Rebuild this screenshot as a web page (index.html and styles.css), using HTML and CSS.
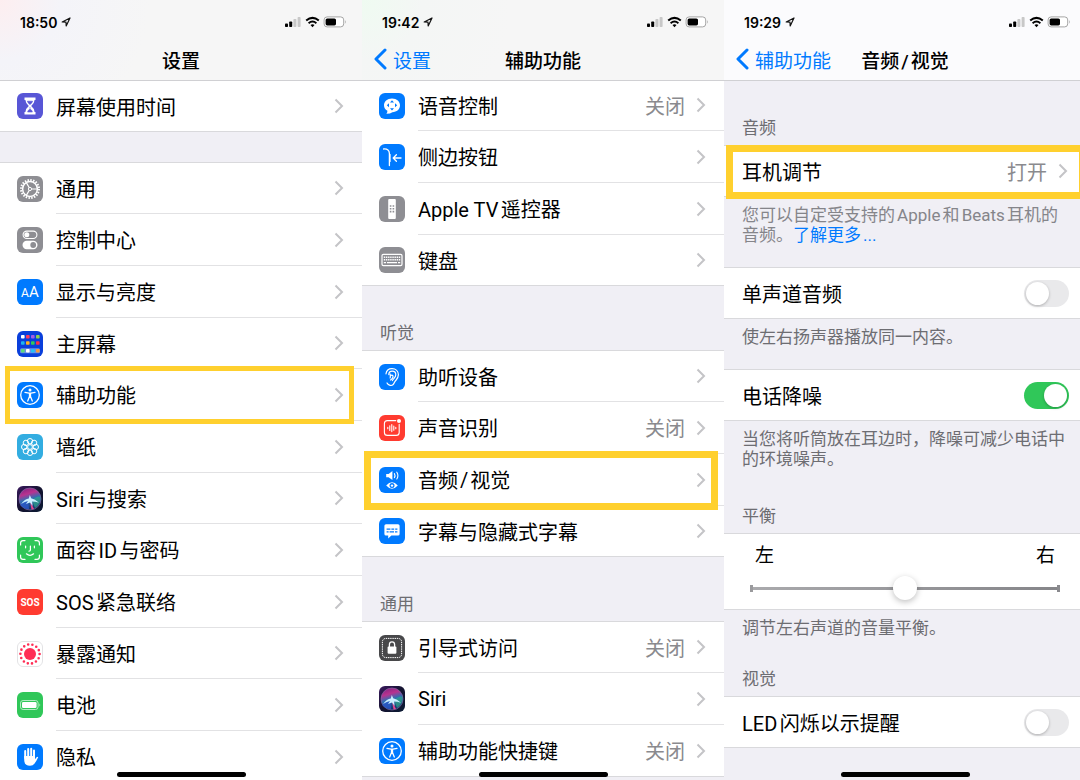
FILE: index.html
```html
<!DOCTYPE html>
<html lang="zh-CN">

<head>
    <meta charset="UTF-8">
    <meta name="viewport" content="width=device-width, initial-scale=1.0">
    <title>设置</title>
    <link rel="stylesheet" href="styles.css">
</head>

<body>
    <!-- shared icons -->
    <svg class="defs" aria-hidden="true">
        <defs>
            <linearGradient id="siri-bg" x1="0" y1="0" x2="1" y2="1">
                <stop offset="0" stop-color="#3a1a5e" />
                <stop offset="0.5" stop-color="#141330" />
                <stop offset="1" stop-color="#0a1a33" />
            </linearGradient>
            <linearGradient id="siri-orb" x1="0" y1="0" x2="0.3" y2="1">
                <stop offset="0" stop-color="#7a2080" />
                <stop offset="0.35" stop-color="#b8338f" />
                <stop offset="0.6" stop-color="#2d6fb4" />
                <stop offset="1" stop-color="#17346e" />
            </linearGradient>
        </defs>
        <symbol id="chevron" viewBox="0 0 10 16">
            <path d="M1.5 1.5 L8 8 L1.5 14.5" fill="none" stroke="#c4c4c7" stroke-width="2" />
        </symbol>
        <symbol id="back" viewBox="0 0 14 22">
            <path d="M12 2 L3 11 L12 20" fill="none" stroke="#007aff" stroke-width="3" stroke-linecap="round" stroke-linejoin="round" />
        </symbol>
        <symbol id="location" viewBox="0 0 10 10">
            <path d="M1.2 5 L9 1 L5.2 8.9 L5 5.2 Z" fill="none" stroke="#111" stroke-width="1.2" stroke-linejoin="round" />
        </symbol>
        <symbol id="status" viewBox="0 0 62 12">
            <rect x="0" y="7.5" width="3" height="3.5" rx="0.8" />
            <rect x="4.2" y="5.5" width="3" height="5.5" rx="0.8" />
            <rect x="8.4" y="3" width="3" height="8" rx="0.8" fill="#c8c8c8" />
            <rect x="12.6" y="1" width="3" height="10" rx="0.8" fill="#c8c8c8" />
            <path d="M21.2 4.6 Q27.5 -0.8 33.8 4.6" fill="none" stroke="#000" stroke-width="2" />
            <path d="M23.6 7.2 Q27.5 4 31.4 7.2" fill="none" stroke="#000" stroke-width="1.9" />
            <path d="M25.5 9 Q27.5 7.6 29.5 9 L27.5 11.2 Z" />
            <rect x="39.1" y="0.9" width="19.6" height="10" rx="3" fill="#fff" stroke="#a5a5a5" stroke-width="1" />
            <rect x="40.6" y="2.4" width="10.4" height="7" rx="1.6" />
            <path d="M60 4 Q61.6 5.9 60 7.8 Z" fill="#a5a5a5" />
        </symbol>
        <symbol id="accessibility" viewBox="0 0 26 26">
            <rect width="26" height="26" rx="6" fill="#007aff" />
            <circle cx="13" cy="13" r="9.3" fill="none" stroke="#fff" stroke-width="1.3" />
            <circle cx="13" cy="7.9" r="1.5" fill="#fff" />
            <path d="M8 10.4 L12 11.1 H14 L18 10.4 M12.5 11.4 V14.6 L10.7 19 M13.5 11.4 V14.6 L15.3 19" fill="none" stroke="#fff" stroke-width="1.3" stroke-linecap="round" stroke-linejoin="round" />
        </symbol>
        <symbol id="siri" viewBox="0 0 26 26">
            <rect width="26" height="26" rx="6" fill="url(#siri-bg)" />
            <circle cx="13" cy="13" r="11" fill="url(#siri-orb)" stroke="#8a6fae" stroke-width="0.6" />
            <path d="M15 14 Q21 9 23.5 11 Q24 18 18 22 Z" fill="#2fa88a" opacity="0.7" />
            <path d="M11 13 Q7 15 3 19 Q7 23.5 12 23 Z" fill="#2b59c9" opacity="0.8" />
            <path d="M13 15 L17 23 L14.5 23.6 Z" fill="#e6468e" />
            <path d="M4 18 Q8 12.8 11.8 12.4 L12.8 9 L14.2 12.2 Q18 13 22 16.8 Q18 15.4 15.2 15.4 L15.6 20 L13 16.6 L9 18 L11 15 Q8 15.6 4 18 Z" fill="#c9efff" />
        </symbol>
    </svg>

    <main class="screens">
        <section class="screen">
            <header class="navbar navbar--pink">
                <div class="status">
                    <span class="time">18:50</span>
                    <svg class="location"><use href="#location" /></svg>
                    <svg class="signals"><use href="#status" /></svg>
                </div>
                <div class="titlebar">
                    <h1 class="title">设置</h1>
                </div>
            </header>

            <ul class="group group--first">
                <li class="row">
                    <a class="link" href="#">
                        <svg class="icon" viewBox="0 0 26 26">
                            <rect width="26" height="26" rx="6" fill="#5856d6" />
                            <path d="M7.5 4.5 H18.5 V7 H17.6 Q17.4 10.5 14.2 13 Q17.4 15.5 17.6 19 H18.5 V21.5 H7.5 V19 H8.4 Q8.6 15.5 11.8 13 Q8.6 10.5 8.4 7 H7.5 Z" fill="#fff" />
                            <path d="M10.4 8.2 H15.6 Q14.9 10.4 13 11.6 Q11.1 10.4 10.4 8.2 Z M13 14 V16.4 M10.6 19 Q11 16.8 13 16.2 Q15 16.8 15.4 19 Z" fill="#5856d6" stroke="#5856d6" stroke-width="0.6" />
                        </svg>
                        <span class="cell">屏幕使用时间<svg class="chevron"><use href="#chevron" /></svg></span>
                    </a>
                </li>
            </ul>

            <ul class="group group--spaced">
                <li class="row">
                    <a class="link" href="#">
                        <svg class="icon" viewBox="0 0 26 26">
                            <rect width="26" height="26" rx="6" fill="#8e8e93" />
                            <circle cx="13" cy="13" r="9" fill="none" stroke="#fff" stroke-width="2" stroke-dasharray="1.5 1.327" />
                            <circle cx="13" cy="13" r="7.4" fill="none" stroke="#fff" stroke-width="1.5" />
                            <path d="M13 13 H20 M13 13 L9.5 6.9 M13 13 L9.5 19.1" stroke="#fff" stroke-width="1.2" />
                            <circle cx="13" cy="13" r="1.6" fill="#8e8e93" stroke="#fff" stroke-width="1" />
                        </svg>
                        <span class="cell">通用<svg class="chevron"><use href="#chevron" /></svg></span>
                    </a>
                </li>
                <li class="row">
                    <a class="link" href="#">
                        <svg class="icon" viewBox="0 0 26 26">
                            <rect width="26" height="26" rx="6" fill="#8e8e93" />
                            <rect x="6.1" y="4.1" width="13.8" height="7.4" rx="3.7" fill="none" stroke="#fff" stroke-width="1.1" />
                            <circle cx="9.8" cy="7.8" r="2.5" fill="#fff" />
                            <rect x="5.5" y="13.8" width="15" height="8.4" rx="4.2" fill="#fff" />
                            <circle cx="16.2" cy="18" r="2.9" fill="#8e8e93" />
                        </svg>
                        <span class="cell">控制中心<svg class="chevron"><use href="#chevron" /></svg></span>
                    </a>
                </li>
                <li class="row">
                    <a class="link" href="#">
                        <svg class="icon" viewBox="0 0 26 26">
                            <rect width="26" height="26" rx="6" fill="#007aff" />
                            <text class="glyph" x="8" y="18" font-size="12">A</text>
                            <text class="glyph" x="17" y="18" font-size="15">A</text>
                        </svg>
                        <span class="cell">显示与亮度<svg class="chevron"><use href="#chevron" /></svg></span>
                    </a>
                </li>
                <li class="row">
                    <a class="link" href="#">
                        <svg class="icon" viewBox="0 0 26 26">
                            <rect width="26" height="26" rx="6" fill="#0a3fdb" />
                            <rect x="3" y="17.3" width="20" height="5" rx="1.5" fill="#6d8fe8" />
                            <rect x="4" y="4" width="3.6" height="3.6" rx="0.8" fill="#fff" />
                            <rect x="9" y="4" width="3.6" height="3.6" rx="0.8" fill="#ff3b5c" />
                            <rect x="14" y="4" width="3.6" height="3.6" rx="0.8" fill="#a45ee5" />
                            <rect x="19" y="4" width="3.6" height="3.6" rx="0.8" fill="#8fd14f" />
                            <rect x="4" y="10.2" width="3.6" height="3.6" rx="0.8" fill="#1cb5f0" />
                            <rect x="9" y="10.2" width="3.6" height="3.6" rx="0.8" fill="#ffb020" />
                            <rect x="14" y="10.2" width="3.6" height="3.6" rx="0.8" fill="#34c759" />
                            <rect x="19" y="10.2" width="3.6" height="3.6" rx="0.8" fill="#ff2d46" />
                            <rect x="4" y="18" width="3.6" height="3.6" rx="0.8" fill="#5ddc7a" />
                            <rect x="9" y="18" width="3.6" height="3.6" rx="0.8" fill="#fff" />
                            <rect x="14" y="18" width="3.6" height="3.6" rx="0.8" fill="#25c3f5" />
                            <rect x="19" y="18" width="3.6" height="3.6" rx="0.8" fill="#f59a3c" />
                        </svg>
                        <span class="cell">主屏幕<svg class="chevron"><use href="#chevron" /></svg></span>
                    </a>
                </li>
                <li class="row">
                    <a class="link" href="#">
                        <svg class="icon"><use href="#accessibility" /></svg>
                        <span class="cell">辅助功能<svg class="chevron"><use href="#chevron" /></svg></span>
                    </a>
                    <span class="mark"></span>
                </li>
                <li class="row">
                    <a class="link" href="#">
                        <svg class="icon" viewBox="0 0 26 26">
                            <rect width="26" height="26" rx="6" fill="#32ade1" />
                            <g fill="none" stroke="#fff" stroke-width="1">
                                <circle cx="13" cy="13" r="2.4" />
                                <circle cx="13" cy="7.2" r="2.7" />
                                <circle cx="17.1" cy="8.9" r="2.7" />
                                <circle cx="18.8" cy="13" r="2.7" />
                                <circle cx="17.1" cy="17.1" r="2.7" />
                                <circle cx="13" cy="18.8" r="2.7" />
                                <circle cx="8.9" cy="17.1" r="2.7" />
                                <circle cx="7.2" cy="13" r="2.7" />
                                <circle cx="8.9" cy="8.9" r="2.7" />
                            </g>
                        </svg>
                        <span class="cell">墙纸<svg class="chevron"><use href="#chevron" /></svg></span>
                    </a>
                </li>
                <li class="row">
                    <a class="link" href="#">
                        <svg class="icon"><use href="#siri" /></svg>
                        <span class="cell">Siri与搜索<svg class="chevron"><use href="#chevron" /></svg></span>
                    </a>
                </li>
                <li class="row">
                    <a class="link" href="#">
                        <svg class="icon" viewBox="0 0 26 26">
                            <rect width="26" height="26" rx="6" fill="#30c759" />
                            <g fill="none" stroke="#fff" stroke-width="1.2" stroke-linecap="round">
                                <path d="M3.6 8 V6 Q3.6 3.6 6 3.6 H8 M18 3.6 H20 Q22.4 3.6 22.4 6 V8 M22.4 18 V20 Q22.4 22.4 20 22.4 H18 M8 22.4 H6 Q3.6 22.4 3.6 20 V18" />
                                <path d="M8.6 9 V10.8 M17.4 9 V10.8 M13.4 9 V13 Q13.4 14.2 12 14.2 M9.4 16.8 Q13 20 16.6 16.8" />
                            </g>
                        </svg>
                        <span class="cell">面容ID与密码<svg class="chevron"><use href="#chevron" /></svg></span>
                    </a>
                </li>
                <li class="row">
                    <a class="link" href="#">
                        <svg class="icon" viewBox="0 0 26 26">
                            <rect width="26" height="26" rx="6" fill="#ff3b30" />
                            <text class="glyph glyph--sos" x="13" y="17" font-size="10">SOS</text>
                        </svg>
                        <span class="cell">SOS紧急联络<svg class="chevron"><use href="#chevron" /></svg></span>
                    </a>
                </li>
                <li class="row">
                    <a class="link" href="#">
                        <svg class="icon" viewBox="0 0 26 26">
                            <rect x="0.5" y="0.5" width="25" height="25" rx="5.5" fill="#fff" stroke="#e3e3e5" />
                            <circle cx="13" cy="13" r="6" fill="#ff2d55" />
                            <circle cx="13" cy="13" r="9.6" fill="none" stroke="#ff2d55" stroke-width="2.6" stroke-linecap="round" stroke-dasharray="0 4.308" />
                        </svg>
                        <span class="cell">暴露通知<svg class="chevron"><use href="#chevron" /></svg></span>
                    </a>
                </li>
                <li class="row">
                    <a class="link" href="#">
                        <svg class="icon" viewBox="0 0 26 26">
                            <rect width="26" height="26" rx="6" fill="#30c759" />
                            <rect x="3.5" y="8.5" width="17.6" height="9" rx="2.6" fill="none" stroke="#b5ebc4" />
                            <rect x="5" y="10" width="14.6" height="6" rx="1.3" fill="#fff" />
                            <path d="M22.4 11.3 Q24.2 13 22.4 14.7 Z" fill="#b5ebc4" />
                        </svg>
                        <span class="cell">电池<svg class="chevron"><use href="#chevron" /></svg></span>
                    </a>
                </li>
                <li class="row">
                    <a class="link" href="#">
                        <svg class="icon" viewBox="0 0 26 26">
                            <rect width="26" height="26" rx="6" fill="#007aff" />
                            <path d="M8.2 14 V7 M11.2 12 V5 M14.2 12 V4.8 M17 13 V6.6" stroke="#fff" stroke-width="2" stroke-linecap="round" />
                            <path d="M7.2 12 H18 V15.2 L19.6 13.2 Q20.6 12.2 21.2 13.2 Q19.4 17 17.6 19.6 Q16 21.8 13 21.8 Q7.2 21.8 7.2 16 Z" fill="#fff" />
                        </svg>
                        <span class="cell">隐私<svg class="chevron"><use href="#chevron" /></svg></span>
                    </a>
                </li>
            </ul>
            <div class="home-bar"></div>
        </section>

        <section class="screen">
            <header class="navbar navbar--green">
                <div class="status">
                    <span class="time">19:42</span>
                    <svg class="location"><use href="#location" /></svg>
                    <svg class="signals"><use href="#status" /></svg>
                </div>
                <div class="titlebar">
                    <a class="back" href="#"><svg class="back-icon"><use href="#back" /></svg>设置</a>
                    <h1 class="title">辅助功能</h1>
                </div>
            </header>

            <ul class="group group--scrolled">
                <li class="row">
                    <a class="link" href="#">
                        <svg class="icon" viewBox="0 0 26 26">
                            <rect width="26" height="26" rx="6" fill="#007aff" />
                            <path d="M13 5.4 C17.8 5.4 21 8.4 21 12.3 C21 16.2 17.8 19.2 13.4 19.2 Q11.4 20.8 7.4 20.8 Q8.6 19.4 8.4 17.8 Q5 15.8 5 12.3 C5 8.4 8.2 5.4 13 5.4 Z" fill="#fff" />
                            <path d="M13 7.2 L15 9.4 H11 Z M13 17.4 L15 15.2 H11 Z M7.8 12.3 L10 10.3 V14.3 Z M18.2 12.3 L16 10.3 V14.3 Z" fill="#007aff" />
                        </svg>
                        <span class="cell">语音控制<span class="value">关闭</span><svg class="chevron"><use href="#chevron" /></svg></span>
                    </a>
                </li>
                <li class="row">
                    <a class="link" href="#">
                        <svg class="icon" viewBox="0 0 26 26">
                            <rect width="26" height="26" rx="6" fill="#007aff" />
                            <path d="M4.6 5 Q10.4 4.6 10.4 9.4 V21.6 M11 10.4 V17.4" fill="none" stroke="#fff" stroke-width="1.3" stroke-linecap="round" />
                            <path d="M22 14 H14.4 M17.4 10.8 L14.2 14 L17.4 17.2" fill="none" stroke="#fff" stroke-width="1.3" stroke-linecap="round" stroke-linejoin="round" />
                        </svg>
                        <span class="cell">侧边按钮<svg class="chevron"><use href="#chevron" /></svg></span>
                    </a>
                </li>
                <li class="row">
                    <a class="link" href="#">
                        <svg class="icon" viewBox="0 0 26 26">
                            <rect width="26" height="26" rx="6" fill="#8e8e93" />
                            <rect x="9.2" y="3" width="7.6" height="20" rx="1" fill="#fff" />
                            <path d="M10.8 10 H12.4 M13.6 10 H15.2 M10.8 12.8 H12.4 M13.6 12.8 H15.2 M10.8 15.6 H12.4 M13.6 15.6 H15.2" stroke="#8e8e93" stroke-width="1.6" />
                        </svg>
                        <span class="cell">Apple TV遥控器<svg class="chevron"><use href="#chevron" /></svg></span>
                    </a>
                </li>
                <li class="row">
                    <a class="link" href="#">
                        <svg class="icon" viewBox="0 0 26 26">
                            <rect width="26" height="26" rx="6" fill="#8e8e93" />
                            <rect x="3" y="7.4" width="20" height="11.2" rx="1.4" fill="none" stroke="#fff" stroke-width="1.2" />
                            <path d="M4.8 10.2 H21.2 M4.8 12.8 H21.2" stroke="#fff" stroke-width="1.6" stroke-dasharray="1.4 0.74" />
                            <path d="M4.8 15.6 H7 M8 15.6 H18 M19 15.6 H21.2" stroke="#fff" stroke-width="1.4" />
                        </svg>
                        <span class="cell">键盘<svg class="chevron"><use href="#chevron" /></svg></span>
                    </a>
                </li>
            </ul>

            <h2 class="label">听觉</h2>
            <ul class="group">
                <li class="row">
                    <a class="link" href="#">
                        <svg class="icon" viewBox="0 0 26 26">
                            <rect width="26" height="26" rx="6" fill="#007aff" />
                            <g fill="none" stroke="#fff" stroke-width="1.2" stroke-linecap="round">
                                <path d="M7 9.8 C7.4 6.4 10 4.6 13 4.6 C16.8 4.6 19.4 7.2 19.4 10.8 C19.4 14.8 16.6 15.8 15.4 18.6 C14.4 21 12.8 21.8 11.2 21.4 C9.6 21 8.6 20.2 8 19" />
                                <path d="M9.8 10.6 C9.8 8.4 11.2 7.2 13.2 7.2 C15.4 7.2 16.8 8.8 16.8 10.8 C16.8 13.6 14.6 14.2 13.4 16.6" />
                                <path d="M11 9.8 Q11.6 12 11.2 14 M11.4 11.6 Q14.2 10.4 14 13 Q13.6 14.8 11.6 16" />
                            </g>
                        </svg>
                        <span class="cell">助听设备<svg class="chevron"><use href="#chevron" /></svg></span>
                    </a>
                </li>
                <li class="row">
                    <a class="link" href="#">
                        <svg class="icon" viewBox="0 0 26 26">
                            <rect width="26" height="26" rx="6" fill="#ff3b30" />
                            <path d="M16.8 5.6 H8.4 Q5.4 5.6 5.4 8.6 V17.4 Q5.4 20.4 8.4 20.4 H17.2 Q20.2 20.4 20.2 17.4 V9.4" fill="none" stroke="#fff" stroke-width="1.1" stroke-linecap="round" />
                            <circle cx="20" cy="6" r="2" fill="#fff" />
                            <path d="M8.8 12.4 V13.8 M10.8 10.8 V15.4 M12.8 9.6 V16.6 M14.8 11 V15.2 M16.8 12.4 V13.8" stroke="#fff" stroke-width="1.1" stroke-linecap="round" />
                        </svg>
                        <span class="cell">声音识别<span class="value">关闭</span><svg class="chevron"><use href="#chevron" /></svg></span>
                    </a>
                </li>
                <li class="row">
                    <a class="link" href="#">
                        <svg class="icon" viewBox="0 0 26 26">
                            <rect width="26" height="26" rx="6" fill="#007aff" />
                            <path d="M7.2 7 H9.6 L13.4 4 V13 L9.6 10.2 H7.2 Z" fill="#fff" />
                            <path d="M15.4 6.6 Q16.6 8.6 15.4 10.6 M17.8 5.2 Q20 8.6 17.8 12" fill="none" stroke="#fff" stroke-width="1.1" stroke-linecap="round" />
                            <path d="M7.2 18.6 Q13 12 18.8 18.6 Q13 25 7.2 18.6 Z" fill="#fff" />
                            <circle cx="13" cy="18.6" r="2.5" fill="#007aff" />
                            <circle cx="13" cy="18.6" r="1.2" fill="#fff" />
                        </svg>
                        <span class="cell">音频<span class="slash">/</span>视觉<svg class="chevron"><use href="#chevron" /></svg></span>
                    </a>
                    <span class="mark mark--bold"></span>
                </li>
                <li class="row">
                    <a class="link" href="#">
                        <svg class="icon" viewBox="0 0 26 26">
                            <rect width="26" height="26" rx="6" fill="#007aff" />
                            <path d="M7 6.2 H19 Q20.6 6.2 20.6 7.8 V16 Q20.6 17.6 19 17.6 H12.4 L9.2 20.6 V17.6 H7 Q5.4 17.6 5.4 16 V7.8 Q5.4 6.2 7 6.2 Z" fill="#fff" />
                            <path d="M7.6 11.2 H11.4 M12.4 11.2 H15.2 M16.2 11.2 H18.4 M7.6 13.8 H9.6 M10.6 13.8 H15 M16 13.8 H18.4" stroke="#007aff" stroke-width="1.2" />
                        </svg>
                        <span class="cell">字幕与隐藏式字幕<svg class="chevron"><use href="#chevron" /></svg></span>
                    </a>
                </li>
            </ul>

            <h2 class="label">通用</h2>
            <ul class="group">
                <li class="row">
                    <a class="link" href="#">
                        <svg class="icon" viewBox="0 0 26 26">
                            <rect width="26" height="26" rx="6" fill="#48484a" />
                            <rect x="3.4" y="3.4" width="19.2" height="19.2" rx="3.4" fill="none" stroke="#fff" stroke-width="1" stroke-dasharray="1.4 0.8" />
                            <rect x="8.6" y="11.6" width="8.8" height="7.2" rx="1" fill="#fff" />
                            <path d="M10.4 12 V9.6 Q10.4 6.9 13 6.9 Q15.6 6.9 15.6 9.6 V12" fill="none" stroke="#fff" stroke-width="1.3" />
                        </svg>
                        <span class="cell">引导式访问<span class="value">关闭</span><svg class="chevron"><use href="#chevron" /></svg></span>
                    </a>
                </li>
                <li class="row">
                    <a class="link" href="#">
                        <svg class="icon"><use href="#siri" /></svg>
                        <span class="cell">Siri<svg class="chevron"><use href="#chevron" /></svg></span>
                    </a>
                </li>
                <li class="row">
                    <a class="link" href="#">
                        <svg class="icon"><use href="#accessibility" /></svg>
                        <span class="cell">辅助功能快捷键<span class="value">关闭</span><svg class="chevron"><use href="#chevron" /></svg></span>
                    </a>
                </li>
            </ul>
            <div class="home-bar"></div>
        </section>

        <section class="screen">
            <header class="navbar">
                <div class="status">
                    <span class="time">19:29</span>
                    <svg class="location"><use href="#location" /></svg>
                    <svg class="signals"><use href="#status" /></svg>
                </div>
                <div class="titlebar">
                    <a class="back" href="#"><svg class="back-icon"><use href="#back" /></svg>辅助功能</a>
                    <h1 class="title">音频<span class="slash">/</span>视觉</h1>
                </div>
            </header>

            <h2 class="label">音频</h2>
            <ul class="group">
                <li class="row">
                    <a class="link link--plain" href="#">
                        <span class="cell">耳机调节<span class="value">打开</span><svg class="chevron"><use href="#chevron" /></svg></span>
                    </a>
                    <span class="mark mark--bold mark--edge"></span>
                </li>
            </ul>
            <p class="note note--light">您可以自定受支持的Apple和Beats耳机的音频。<a class="more" href="#">了解更多...</a></p>

            <div class="group">
                <label class="row row--switch">单声道音频<input class="switch" type="checkbox"></label>
            </div>
            <p class="note">使左右扬声器播放同一内容。</p>

            <div class="group">
                <label class="row row--switch">电话降噪<input class="switch" type="checkbox" checked></label>
            </div>
            <p class="note">当您将听筒放在耳边时，降噪可减少电话中的环境噪声。</p>

            <h2 class="label label--after-note" id="balance">平衡</h2>
            <div class="group balance">
                <div class="sides"><span>左</span><span>右</span></div>
                <input class="slider" type="range" min="0" max="100" value="50" aria-labelledby="balance">
            </div>
            <p class="note">调节左右声道的音量平衡。</p>

            <h2 class="label label--close">视觉</h2>
            <div class="group">
                <label class="row row--switch">LED闪烁以示提醒<input class="switch" type="checkbox"></label>
            </div>
            <div class="home-bar"></div>
        </section>
    </main>
</body>

</html>
```
FILE: styles.css
```css
* {
    box-sizing: border-box;
}

body {
    margin: 0;
    overflow: hidden;
    background-color: #f0eff5;
    color: #000;
    font-family: Roboto, "Noto Sans CJK SC", sans-serif;
    font-size: 20px;
    text-autospace: normal;
}

ul, h1, h2, p {
    margin: 0;
    padding: 0;
    list-style: none;
    font-weight: 400;
}

a {
    color: inherit;
    text-decoration: none;
}

.defs {
    position: absolute;
    width: 0;
    height: 0;
}

/* three phone screens, the last one runs slightly past the window */
.screens {
    display: grid;
    grid-template-columns: repeat(3, 1fr);
    width: calc(100% + 6px);
    height: 100vh;
}

.screen {
    position: relative;
    min-width: 0;
    overflow: hidden;
    background-color: #f0eff5;
}

/* top bar */
.navbar {
    position: relative;
    z-index: 1;
    padding-top: 10px;
    background-color: #fbfbfd;
    border-bottom: 1px solid #d0d0d3;
}

.navbar--pink {
    background: radial-gradient(circle at 0 0, #fdeef0, #f4f4f9 60px, #f6f6f6 150px);
}

.navbar--green {
    background: radial-gradient(circle at 0 0, #effbf1, #f4f6f5 60px, #f6f6f6 150px);
}

.status {
    display: flex;
    align-items: center;
    height: 24px;
    padding: 0 15px 0 20px;
}

.time {
    font-family: Inter, sans-serif;
    font-size: 14px;
    font-weight: 600;
}

.location {
    width: 10px;
    height: 10px;
    margin-left: 4px;
}

.signals {
    width: 62px;
    height: 12px;
    margin-left: auto;
}

.titlebar {
    display: grid;
    grid-template-columns: 1fr auto 1fr;
    align-items: center;
    height: 46px;
    padding: 4px 11px 0;
    font-size: 19px;
}

.title {
    grid-column: 2;
    font-size: 19px;
    font-weight: 500;
}

.back {
    display: flex;
    align-items: center;
    gap: 6px;
    grid-row: 1;
    color: #007aff;
}

.back-icon {
    width: 14px;
    height: 22px;
}

/* lists */
.group {
    background-color: #fff;
    border-top: 1px solid #d9d9dc;
}

.group--first {
    border-top: none;
}

.group--scrolled {
    margin-top: -1px;
    border-top: none;
}

.group--spaced {
    margin-top: 30px;
}

.row {
    position: relative;
    height: 52px;
}

.row:nth-child(3n+1) {
    height: 51px;
}

.row:last-child {
    border-bottom: 1px solid #d9d9dc;
}

.link {
    display: flex;
    align-items: center;
    gap: 13px;
    height: 100%;
    padding-left: 17px;
}

.link--plain {
    padding-left: 18px;
}

.icon {
    flex: none;
    width: 26px;
    height: 26px;
}

.glyph {
    fill: #fff;
    font-family: Roboto, sans-serif;
    text-anchor: middle;
}

.glyph--sos {
    font-weight: 700;
}

.cell {
    display: flex;
    flex: 1;
    align-items: center;
    height: 100%;
    padding-right: 18px;
    border-bottom: 1px solid #e2e2e4;
}

.row:last-child .cell {
    border-bottom: none;
}

.slash {
    margin: 0 2px;
}

.value {
    margin-left: auto;
    color: #8a8a8e;
}

.chevron {
    flex: none;
    width: 10px;
    height: 16px;
    margin-left: auto;
}

.value + .chevron {
    margin-left: 11px;
}

.row--switch {
    display: flex;
    align-items: center;
    justify-content: space-between;
    padding: 0 17px 0 18px;
}

/* section labels and notes */
.label {
    padding: 37px 18px 7px;
    color: #6d6d72;
    font-size: 17px;
    line-height: 20px;
}

.label--after-note {
    padding-top: 15px;
}

.label--close {
    padding-top: 9px;
}

.note {
    padding: 8px 18px 22px;
    color: #6d6d72;
    font-size: 17px;
    line-height: 20px;
}

.note--light {
    color: #85858a;
}

.more {
    color: #007aff;
}

/* yellow frames */
.mark {
    position: absolute;
    top: -3px;
    right: 8px;
    bottom: -3px;
    left: 5px;
    border: 5px solid #ffd02e;
    pointer-events: none;
    z-index: 1;
}

.mark--bold {
    right: 6px;
    bottom: -4px;
    left: 2px;
    border-width: 7px;
}

.mark--edge {
    top: -1px;
    right: 0;
    bottom: -3px;
}

/* controls */
.switch {
    appearance: none;
    width: 45px;
    height: 27px;
    margin: 0;
    padding: 2px;
    border-radius: 14px;
    background-color: #e9e9eb;
}

.switch::before {
    content: "";
    display: block;
    width: 23px;
    height: 23px;
    border-radius: 50%;
    background-color: #fff;
    box-shadow: 0 1px 3px rgba(0, 0, 0, 0.25);
}

.switch:checked {
    background-color: #30c759;
}

.switch:checked::before {
    margin-left: 18px;
}

.balance {
    padding: 10px 26px 9px;
    border-bottom: 1px solid #d9d9dc;
}

.sides {
    display: flex;
    justify-content: space-between;
    padding: 0 5px;
    font-size: 19px;
    line-height: 24px;
}

.slider {
    appearance: none;
    display: block;
    width: 100%;
    height: 24px;
    margin: 8px 0 0;
    background:
        linear-gradient(#9a9a9d, #9a9a9d) left center / 3px 7px no-repeat,
        linear-gradient(#8a8a8e, #8a8a8e) right center / 3px 7px no-repeat,
        linear-gradient(90deg, #aaaaad, #858589) center / 100% 3px no-repeat;
}

.slider::-webkit-slider-thumb {
    appearance: none;
    width: 24px;
    height: 24px;
    border-radius: 50%;
    background-color: #fff;
    box-shadow: 0 2px 6px rgba(0, 0, 0, 0.25);
}

.home-bar {
    position: absolute;
    bottom: 3px;
    left: 50%;
    width: 129px;
    height: 5px;
    margin-left: -64px;
    border-radius: 3px;
    background-color: #000;
    z-index: 2;
}
```
